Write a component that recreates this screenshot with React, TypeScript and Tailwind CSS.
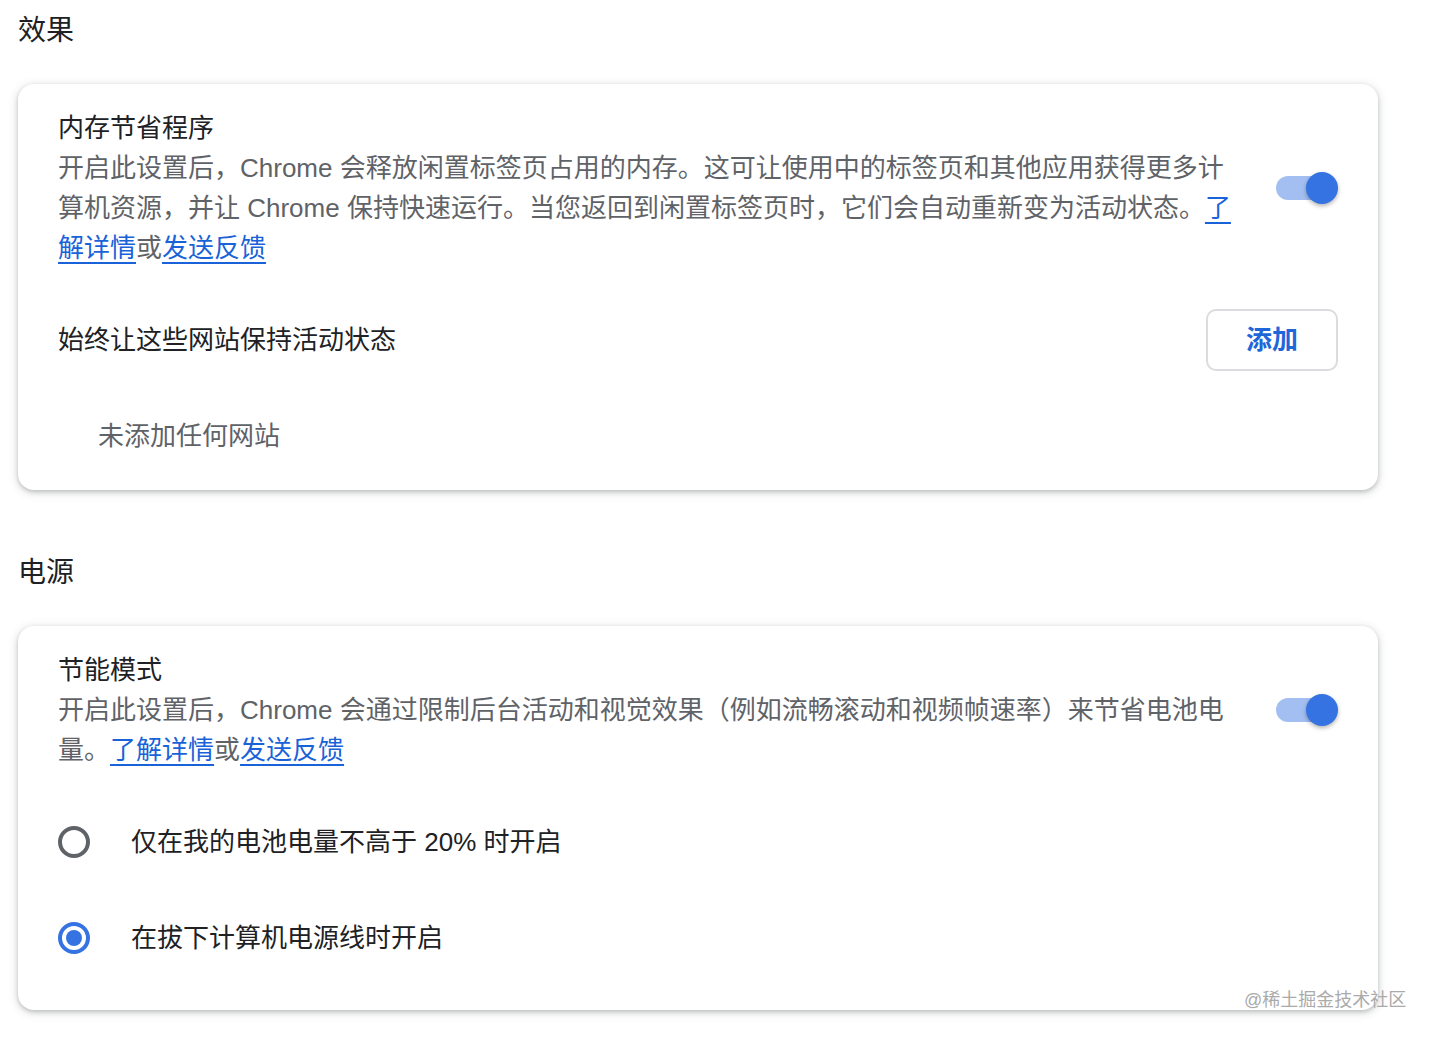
const FONT = 'font-["Liberation_Sans","Noto_Sans_CJK_SC",sans-serif]'

function Toggle() {
  return (
    <div className="relative w-[62px] h-8 shrink-0">
      <div className="absolute left-0 top-1 w-[56px] h-6 rounded-full bg-[#a3bff2]" />
      <div className="absolute right-0 top-0 w-8 h-8 rounded-full bg-[#3573e2] shadow-[0_2px_4px_rgba(0,0,0,0.3)]" />
    </div>
  )
}

function Radio({ checked }: { checked?: boolean }) {
  return (
    <div
      className={
        checked
          ? 'w-[32px] h-[32px] rounded-full border-[4px] border-[#3573e2] flex items-center justify-center shrink-0'
          : 'w-[32px] h-[32px] rounded-full border-[4px] border-[#5f6368] shrink-0'
      }
    >
      {checked && <div className="w-[16px] h-[16px] rounded-full bg-[#3573e2]" />}
    </div>
  )
}

function Link({ children }: { children: React.ReactNode }) {
  return <a className="text-[#1a62d8] underline underline-offset-[5px] decoration-[2px]">{children}</a>
}

function Card({ children }: { children: React.ReactNode }) {
  return (
    <div className="bg-white rounded-[16px] shadow-[0_2px_4px_rgba(60,64,67,0.25),0_2px_8px_2px_rgba(60,64,67,0.12)] px-10">
      {children}
    </div>
  )
}

export default function App() {
  return (
    <div className={`${FONT} relative min-h-[1038px] w-[1432px] bg-white pt-[11px] pl-[18px] text-[26px] leading-[40px]`}>
      <div className="w-[1360px]">
        <h2 className="text-[28px] leading-[40px] text-[#202124]">效果</h2>
        <div className="mt-[33px]">
          <Card>
            <div className="pt-6 flex items-center gap-10">
              <div className="w-[1178px]">
                <div className="text-[#202124]">内存节省程序</div>
                <div className="text-[#5f6368]">
                  开启此设置后，Chrome 会释放闲置标签页占用的内存。这可让使用中的标签页和其他应用获得更多计算机资源，并让 Chrome 保持快速运行。当您返回到闲置标签页时，它们会自动重新变为活动状态。
                  <Link>了解详情</Link>或<Link>发送反馈</Link>
                </div>
              </div>
              <Toggle />
            </div>
            <div className="mt-[41px] flex items-center justify-between">
              <div className="text-[#202124]">始终让这些网站保持活动状态</div>
              <button className="w-[132px] h-[62px] rounded-[10px] border-2 border-[#dadce0] text-[#1f66d9] font-semibold text-[26px]">
                添加
              </button>
            </div>
            <div className="mt-[45px] pb-[34px] pl-10 text-[#5f6368]">未添加任何网站</div>
          </Card>
        </div>

        <h2 className="mt-[63px] text-[28px] leading-[40px] text-[#202124]">电源</h2>
        <div className="mt-[33px]">
          <Card>
            <div className="pt-6 flex items-center gap-10">
              <div className="w-[1178px]">
                <div className="text-[#202124]">节能模式</div>
                <div className="text-[#5f6368]">
                  开启此设置后，Chrome 会通过限制后台活动和视觉效果（例如流畅滚动和视频帧速率）来节省电池电量。
                  <Link>了解详情</Link>或<Link>发送反馈</Link>
                </div>
              </div>
              <Toggle />
            </div>
            <div className="mt-6 pb-6">
              <div className="h-[96px] flex items-center gap-[41px]">
                <Radio />
                <span className="text-[#202124]">仅在我的电池电量不高于 20% 时开启</span>
              </div>
              <div className="h-[96px] flex items-center gap-[41px]">
                <Radio checked />
                <span className="text-[#202124]">在拔下计算机电源线时开启</span>
              </div>
            </div>
          </Card>
        </div>
      </div>
      <div className="absolute left-[1244px] top-[987px] text-[18px] leading-[26px] text-[#aaaaaa]">@稀土掘金技术社区</div>
    </div>
  )
}
